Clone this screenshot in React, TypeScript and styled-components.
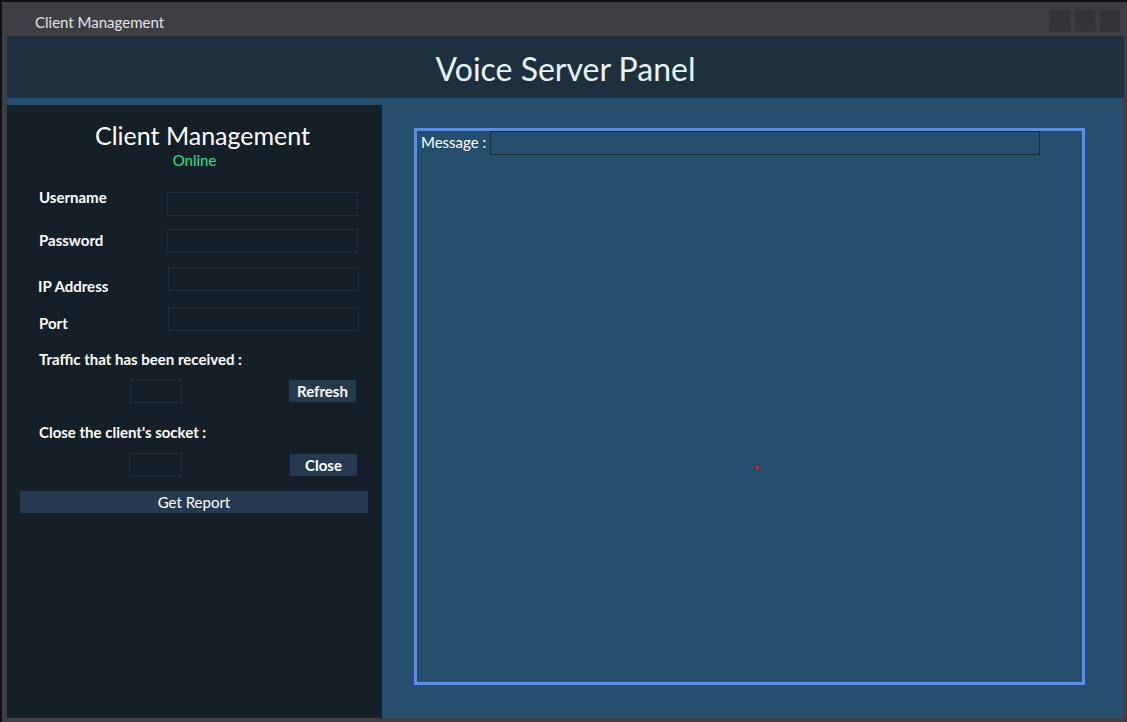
import styled, {createGlobalStyle} from 'styled-components'

const GlobalStyle = createGlobalStyle`
  html, body {
    margin: 0;
    padding: 0;
    background: #111214;
  }
  body {
    font-family: Lato, 'Open Sans', sans-serif;
  }
`

const Window = styled.div`
  width: 1127px;
  height: 722px;
  box-sizing: border-box;
  border-top: 2px solid #111214;
  border-left: 2px solid #111214;
  background: #3e3f44;
  display: flex;
  flex-direction: column;
`

const TitleBar = styled.div`
  height: 34px;
  display: flex;
  align-items: center;
  padding: 0 6px 0 33px;
  flex-shrink: 0;
`

const TitleText = styled.span`
  flex: 1;
  color: #e4e4e4;
  font-size: 15px;
  margin-top: 5px;
`

const WinButtons = styled.div`
  display: flex;
  gap: 3px;
  margin-top: 3px;
`

const WinButton = styled.div`
  width: 22px;
  height: 23px;
  background: #343338;
  box-shadow: inset 0 0 0 1px #3a393e;
`

const Body = styled.div`
  flex: 1;
  display: flex;
  flex-direction: column;
  padding: 0 3px 4px 5px;
  min-height: 0;
`

const Header = styled.div`
  height: 62px;
  flex-shrink: 0;
  background: #1e2f3e;
  display: flex;
  align-items: center;
  justify-content: center;
  color: #e3f6ff;
  font-size: 32px;
  padding-top: 2px;
  box-sizing: border-box;
`

const Main = styled.div`
  flex: 1;
  display: flex;
  background: #264e6d;
  min-height: 0;
`

const SidePanel = styled.div`
  width: 375px;
  margin-top: 7px;
  background: #151f28;
  display: flex;
  flex-direction: column;
  padding-top: 14px;
  box-sizing: border-box;
`

const PanelTitle = styled.div`
  color: #ffffff;
  font-size: 25px;
  line-height: 32px;
  text-align: center;
  padding-left: 16px;
`

const Status = styled.div`
  color: #2fe08c;
  font-size: 15px;
  line-height: 18px;
  text-align: center;
`

const Field = styled.div<{$top: number; $inputLeft: number}>`
  display: grid;
  grid-template-columns: ${p => p.$inputLeft}px 191px;
  height: 24px;
  margin-top: ${p => p.$top}px;
  padding-left: 32px;
`

const Label = styled.label<{$shift?: number; $left?: number}>`
  color: #ffffff;
  font-size: 15px;
  font-weight: 700;
  line-height: 18px;
  margin-top: ${p => p.$shift ?? 0}px;
  margin-left: ${p => p.$left ?? 0}px;
`

const TextInput = styled.input`
  box-sizing: border-box;
  width: 100%;
  height: 24px;
  background: #151f28;
  border: 1px solid #1f2f3d;
  outline: none;
  color: #fff;
  padding: 0 4px;
`

const SectionLabel = styled(Label)<{$top: number}>`
  display: block;
  margin-top: ${p => p.$top}px;
  padding-left: 32px;
`

const ActionRow = styled.div<{$top: number; $boxLeft: number}>`
  display: flex;
  align-items: flex-start;
  margin-top: ${p => p.$top}px;
  padding-left: ${p => p.$boxLeft}px;
`

const SmallBox = styled.div<{$width: number}>`
  width: ${p => p.$width}px;
  height: 24px;
  box-sizing: border-box;
  border: 1px solid #1f2f3d;
`

const ActionButton = styled.button<{$gap: number}>`
  margin-left: ${p => p.$gap}px;
  margin-top: 1px;
  width: 67px;
  height: 22px;
  padding: 0;
  border: none;
  background: #243a50;
  color: #ffffff;
  font-family: inherit;
  font-size: 15px;
  font-weight: 700;
`

const ReportButton = styled.button`
  margin: 14px 14px 0 13px;
  height: 22px;
  border: none;
  padding: 0;
  background: #243a50;
  color: #ffffff;
  font-family: inherit;
  font-size: 15px;
`

const Workspace = styled.div`
  flex: 1;
  padding: 30px 39px 33px 32px;
  display: flex;
`

const MessageBox = styled.div`
  position: relative;
  flex: 1;
  border: 3px solid #5b8fe3;
  padding-left: 4px;
`

const MessageRow = styled.div`
  display: flex;
  align-items: center;
  gap: 4px;
`

const MessageLabel = styled.span`
  color: #ffffff;
  font-size: 15px;
  line-height: 18px;
  margin-top: -2px;
`

const MessageInput = styled.input`
  box-sizing: border-box;
  width: 550px;
  height: 24px;
  background: #264e6d;
  border: 1px solid #182b3b;
  outline: none;
  color: #fff;
`

const Marker = styled.div`
  position: absolute;
  left: 339px;
  top: 335px;
  width: 3px;
  height: 3px;
  background: #ff1e1e;
  border-radius: 1px;
`

export default function App() {
  return (
    <>
      <GlobalStyle />
      <Window>
        <TitleBar>
          <TitleText>Client Management</TitleText>
          <WinButtons>
            <WinButton />
            <WinButton />
            <WinButton />
          </WinButtons>
        </TitleBar>
        <Body>
          <Header>Voice Server Panel</Header>
          <Main>
            <SidePanel>
              <PanelTitle>Client Management</PanelTitle>
              <Status>Online</Status>

              <Field $top={23} $inputLeft={128}>
                <Label $shift={-4}>Username</Label>
                <TextInput />
              </Field>
              <Field $top={13} $inputLeft={128}>
                <Label $shift={2}>Password</Label>
                <TextInput />
              </Field>
              <Field $top={14} $inputLeft={129}>
                <Label $shift={10} $left={-1}>IP Address</Label>
                <TextInput />
              </Field>
              <Field $top={16} $inputLeft={129}>
                <Label $shift={7}>Port</Label>
                <TextInput />
              </Field>

              <SectionLabel $top={19}>Traffic that has been received :</SectionLabel>
              <ActionRow $top={11} $boxLeft={123}>
                <SmallBox $width={52} />
                <ActionButton $gap={107}>Refresh</ActionButton>
              </ActionRow>

              <SectionLabel $top={20}>Close the client's socket :</SectionLabel>
              <ActionRow $top={12} $boxLeft={122}>
                <SmallBox $width={53} />
                <ActionButton $gap={108}>Close</ActionButton>
              </ActionRow>

              <ReportButton>Get Report</ReportButton>
            </SidePanel>

            <Workspace>
              <MessageBox>
                <MessageRow>
                  <MessageLabel>Message :</MessageLabel>
                  <MessageInput />
                </MessageRow>
                <Marker />
              </MessageBox>
            </Workspace>
          </Main>
        </Body>
      </Window>
    </>
  )
}
